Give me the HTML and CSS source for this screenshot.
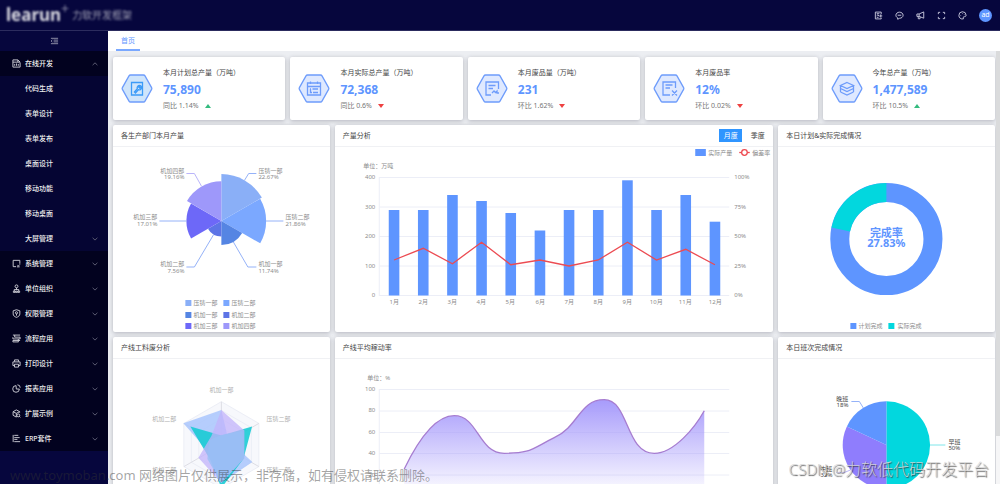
FILE: index.html
```html
<!DOCTYPE html>
<html lang="zh-CN">
<head>
<meta charset="utf-8">
<title>力软开发平台</title>
<link rel="stylesheet" href="styles.css">
</head>
<body>
<svg class="defs" aria-hidden="true">
  <symbol id="down" viewBox="0 0 6 4"><path d="M.6.8 3 3.1 5.4.8"/></symbol>
  <symbol id="up" viewBox="0 0 6 4"><path d="M.6 3.1 3 .8 5.4 3.1"/></symbol>
  <symbol id="hex" viewBox="0 0 32 29"><path d="M9.5 1h13q1 0 1.5.9l6.6 11.7q.5.9 0 1.8L24 27.1q-.5.9-1.5.9h-13q-1 0-1.5-.9L1.400 15.400q-.5-.9 0-1.800L8 1.900Q8.500 1 9.500 1z"/></symbol>
</svg>

<header class="topbar">
  <div class="brand"><span class="brand-name">learun<sup>+</sup></span><span class="brand-sub">力软开发框架</span></div>
  <div class="tools">
    <button class="tool" aria-label="编辑"><svg viewBox="0 0 10 10"><path d="M8 3.500V1.200H1.500v7.600H8V7.500M3 3h3M3 5.200l1.500-1 1 1.600M3 7h2M5.800 5.500h3.400M7.500 3.800v3.400"/></svg></button>
    <button class="tool" aria-label="消息"><svg viewBox="0 0 10 10"><path d="M5 1.300c2.200 0 4 1.500 4 3.400S7.200 8.100 5 8.100L3 9.200V7.700C1.800 7.100 1 6 1 4.700c0-1.900 1.800-3.400 4-3.400zM3 4.700h4"/></svg></button>
    <button class="tool" aria-label="公告"><svg viewBox="0 0 10 10"><path d="M1 3.300h2.500L8.600 1v7L3.500 6H1zM3.500 3.300V6M2.500 6v2.600h2V6.500"/></svg></button>
    <button class="tool" aria-label="全屏"><svg viewBox="0 0 10 10"><path d="M1.500 3.500v-2h2M6.500 1.500h2v2M8.500 6.500v2h-2M3.500 8.500h-2v-2"/></svg></button>
    <button class="tool" aria-label="主题"><svg viewBox="0 0 10 10"><path d="M6 8.800C3 9.300 1 7.500 1 5a4 4 0 0 1 8-.3c0 1.700-1.700 1.600-2.600 1.700-1 .2-.1 1.300-.4 2.400zM3 4.500v.6M4.700 2.800h.6M7 4v.5"/></svg></button>
    <button class="avatar">ad</button>
  </div>
</header>

<div class="shell">
  <nav class="sidebar">
    <button class="collapse" aria-label="收起菜单"><svg viewBox="0 0 10 8"><path d="M1 1h8M4 3h5M4 5h5M1 7h8M2.600 2.800 1.200 4l1.400 1.200"/></svg></button>
    <a class="item" href="#"><svg class="ico" viewBox="0 0 10 10"><path d="M9 4V9H1V1h5.500L9 3.500H1M3 5.500v2M5 5v2.500M7 5.500v2M6.500 1v2.500"/></svg>在线开发<svg class="chev"><use href="#up"/></svg></a>
    <div class="submenu">
      <a class="item" href="#">代码生成</a>
      <a class="item" href="#">表单设计</a>
      <a class="item" href="#">表单发布</a>
      <a class="item" href="#">桌面设计</a>
      <a class="item" href="#">移动功能</a>
      <a class="item" href="#">移动桌面</a>
      <a class="item" href="#">大屏管理<svg class="chev"><use href="#down"/></svg></a>
    </div>
    <a class="item" href="#"><svg class="ico" viewBox="0 0 10 10"><path d="M4.500 8.500H1.300v-7h7.400v3.800M5.500 8.700h3M6 7l1 .8L8.800 6"/></svg>系统管理<svg class="chev"><use href="#down"/></svg></a>
    <a class="item" href="#"><svg class="ico" viewBox="0 0 10 10"><path d="M5 1a1.600 1.600 0 1 1 0 3.200A1.600 1.600 0 0 1 5 1zM5 4.200v2.300M2.500 8V6.200h5V8M1.500 8h2v1.300h-2zM4 8h2v1.300H4zM6.500 8h2v1.300h-2z"/></svg>单位组织<svg class="chev"><use href="#down"/></svg></a>
    <a class="item" href="#"><svg class="ico" viewBox="0 0 10 10"><path d="M5 .8 8.700 2v3.500C8.700 7.500 7 8.600 5 9.300 3 8.600 1.300 7.500 1.300 5.500V2zM5 3a1.200 1.200 0 1 1 0 2.400A1.200 1.200 0 0 1 5 3zM5 5.400v2"/></svg>权限管理<svg class="chev"><use href="#down"/></svg></a>
    <a class="item" href="#"><svg class="ico" viewBox="0 0 10 10"><path d="M1 1.200h8M2.800 3.500H9v2H1M1 3.500v2M7.200 8.800H1V7.200h8M3 1.200v2.300M7 5.500v3.300"/></svg>流程应用<svg class="chev"><use href="#down"/></svg></a>
    <a class="item" href="#"><svg class="ico" viewBox="0 0 10 10"><path d="M2.800 3V1h4.400v2M2.800 7.300H1V3.200h8v4.100H7.200M2.800 5.800h4.400V9H2.800z"/></svg>打印设计<svg class="chev"><use href="#down"/></svg></a>
    <a class="item" href="#"><svg class="ico" viewBox="0 0 10 10"><path d="M4.500 1.800A3.700 3.700 0 1 0 8.200 5.600H4.800zM6 .9A3.200 3.200 0 0 1 9.100 4.100"/></svg>报表应用<svg class="chev"><use href="#down"/></svg></a>
    <a class="item" href="#"><svg class="ico" viewBox="0 0 10 10"><path d="M8.500 4V3L4.800 1 1.200 3v4l3.600 2M1.200 3l3.600 1.800L8.500 3M4.800 4.800V9M7 5.500a1.600 1.600 0 1 1 0 3.200 1.600 1.600 0 0 1 0-3.200zM8 8l1.300 1.300"/></svg>扩展示例<svg class="chev"><use href="#down"/></svg></a>
    <a class="item" href="#"><svg class="ico" viewBox="0 0 10 10"><path d="M1.300 1v8M2.500 1.500H7M2.500 4h6M2.500 6h3.500M2.500 8.500H9"/></svg>ERP套件<svg class="chev"><use href="#down"/></svg></a>
  </nav>

  <main class="main">
    <div class="tabs"><a class="tab" href="#">首页</a></div>
    <div class="view">
      <div class="board">
        <section class="kpis">
          <article class="card kpi">
            <svg class="badge" viewBox="0 0 32 29"><use class="hex strong" href="#hex"/><path class="vivid" d="M10.500 8.500h11v12.500h-11zM13 18.500l3.300-3.800a2.300 2.300 0 0 1 3-3l-1.500 1.500 1 1 1.500-1.500a2.300 2.300 0 0 1-3 3L14 19.500"/></svg>
            <div><h3>本月计划总产量（万吨）</h3><strong>75,890</strong><p>同比 1.14%<i class="rise"></i></p></div>
          </article>
          <article class="card kpi">
            <svg class="badge" viewBox="0 0 32 29"><use class="hex" href="#hex"/><path d="M9.500 9h13v12h-13zM9.500 12.500h13M12.500 7.500v2.500M19.500 7.500v2.500M12 15h1M14.500 15H20M12.500 15v3.500H14M15 18.500h5"/></svg>
            <div><h3>本月实际总产量（万吨）</h3><strong>72,368</strong><p>同比 0.6%<i class="fall"></i></p></div>
          </article>
          <article class="card kpi">
            <svg class="badge" viewBox="0 0 32 29"><use class="hex" href="#hex"/><path d="M15 21h-5V8h12.500v7M12.500 11.500h7M12.500 14.500h4.500M16 19l2-2 1.500 1.500 1.500-1.500v2h2"/></svg>
            <div><h3>本月废品量（万吨）</h3><strong>231</strong><p>环比 1.62%<i class="fall"></i></p></div>
          </article>
          <article class="card kpi">
            <svg class="badge" viewBox="0 0 32 29"><use class="hex" href="#hex"/><path d="M17 21h-7V8h12.500v6M12.500 11h7M12.500 14h4.500M19 16.500l5 5M24 16.500l-5 5"/></svg>
            <div><h3>本月废品率</h3><strong>12%</strong><p>环比 0.02%<i class="fall"></i></p></div>
          </article>
          <article class="card kpi">
            <svg class="badge" viewBox="0 0 32 29"><use class="hex" href="#hex"/><path d="M16 8.500l6.500 3-6.500 3-6.500-3zM9.500 14.500l6.500 3 6.500-3M9.500 11.500v3M22.500 11.500v3M9.500 18l6.500 3 6.500-3M9.500 14.500V18M22.500 14.500V18"/></svg>
            <div><h3>今年总产量（万吨）</h3><strong>1,477,589</strong><p>环比 10.5%<i class="rise"></i></p></div>
          </article>
        </section>

        <section class="charts">
          <article class="card panel">
            <header><h2>各生产部门本月产量</h2></header>
            <svg class="chart" viewBox="0 0 216 185">
              <g transform="translate(108 74)">
                <path fill="#8aaff7" d="M0 0V-47A47 47 0 0 1 40.500-23.400z"/>
                <path fill="#7ba8ff" d="M0 0 38.800-22.300A44.700 44.700 0 0 1 38.800 22.300z"/>
                <path fill="#5585e3" d="M0 0 20.800 12A24 24 0 0 1 0 24z"/>
                <path fill="#5d74e6" d="M0 0V15.500A15.500 15.500 0 0 1-13.400 7.700z"/>
                <path fill="#6d68f8" d="M0 0-30.300 17.500A35 35 0 0 1-30.300-17.500z"/>
                <path fill="#9e98fa" d="M0 0-34.400-19.900A39.700 39.700 0 0 1 0-39.700z"/>
                <g class="leader">
                  <path d="M23-40.500 27.300-47.500H35M44.700 0H62M12 21 26.500 46H35M-8 14-27 46H-35M-35 0H-62"/>
                  <path class="lilac" d="M-20-35-27-47.500H-35"/>
                </g>
                <g class="label"><text x="37" y="-48">压铸一部</text><text x="37" y="-42">22.67%</text><text x="64" y="-2">压铸二部</text><text x="64" y="5">21.86%</text><text x="37" y="45">机加一部</text><text x="37" y="52">11.74%</text></g>
                <g class="label end"><text x="-37" y="-48">机加四部</text><text x="-37" y="-42">19.16%</text><text x="-64" y="-2">机加三部</text><text x="-64" y="5">17.01%</text><text x="-37" y="45">机加二部</text><text x="-37" y="52">7.56%</text></g>
              </g>
              <g>
                <rect x="72" y="153" width="6" height="6" fill="#8aaff7"/><rect x="110" y="153" width="6" height="6" fill="#7ba8ff"/>
                <rect x="72" y="165" width="6" height="6" fill="#5585e3"/><rect x="110" y="165" width="6" height="6" fill="#5d74e6"/>
                <rect x="72" y="176" width="6" height="6" fill="#6d68f8"/><rect x="110" y="176" width="6" height="6" fill="#9e98fa"/>
              </g>
              <g class="label"><text x="80" y="158">压铸一部</text><text x="118" y="158">压铸二部</text><text x="80" y="170">机加一部</text><text x="118" y="170">机加二部</text><text x="80" y="181">机加三部</text><text x="118" y="181">机加四部</text></g>
            </svg>
          </article>

          <article class="card panel wide">
            <header><h2>产量分析</h2><div class="switch"><button class="on">月度</button><button>季度</button></div></header>
            <svg class="chart" viewBox="0 0 438 185">
              <path class="grid" d="M44 30.500H394M44 60H394M44 89.500H394M44 119H394M44 148.500H394M44 30V149"/>
              <g class="bars">
                <rect x="53.500" y="63" width="10.600" height="85.500"/><rect x="82.700" y="63" width="10.600" height="85.500"/><rect x="111.900" y="48" width="10.600" height="100.500"/><rect x="141" y="54" width="10.600" height="94.500"/><rect x="170.200" y="66" width="10.600" height="82.500"/><rect x="199.400" y="83.500" width="10.600" height="65"/><rect x="228.500" y="63" width="10.600" height="85.500"/><rect x="257.700" y="63" width="10.600" height="85.500"/><rect x="286.900" y="33.300" width="10.600" height="115.200"/><rect x="316" y="63" width="10.600" height="85.500"/><rect x="345.200" y="48" width="10.600" height="100.500"/><rect x="374.400" y="74.700" width="10.600" height="73.800"/>
              </g>
              <path class="trend" d="M58.800 113 88 101.300 117.200 116.700 146.300 95.300 175.500 117.700 204.700 113 233.800 119 263 113 292.200 95.300 321.300 113 350.500 102.300 379.700 117.700"/>
              <g class="label end"><text x="40" y="32">400</text><text x="40" y="62">300</text><text x="40" y="91">200</text><text x="40" y="121">100</text><text x="40" y="150">0</text></g>
              <g class="label"><text x="28" y="21">单位：万吨</text><text x="399" y="32">100%</text><text x="399" y="62">75%</text><text x="399" y="91">50%</text><text x="399" y="121">25%</text><text x="399" y="150">0%</text></g>
              <g class="label mid"><text x="59" y="157">1月</text><text x="88" y="157">2月</text><text x="117" y="157">3月</text><text x="146" y="157">4月</text><text x="175" y="157">5月</text><text x="205" y="157">6月</text><text x="234" y="157">7月</text><text x="263" y="157">8月</text><text x="292" y="157">9月</text><text x="321" y="157">10月</text><text x="350" y="157">11月</text><text x="380" y="157">12月</text></g>
              <rect x="360" y="2" width="10.600" height="7" fill="#5e95ff"/>
              <path class="mark" d="M404 5.500h10.500"/><circle class="mark" cx="409.200" cy="5.500" r="2.800"/>
              <g class="label"><text x="373" y="8">实际产量</text><text x="417" y="8">偏差率</text></g>
            </svg>
          </article>

          <article class="card panel">
            <header><h2>本日计划&amp;实际完成情况</h2></header>
            <svg class="chart" viewBox="0 0 216 185">
              <g transform="translate(108 92)">
                <circle class="ring" r="46.600"/>
                <circle class="ring done" r="46.600" pathLength="10000" stroke-dasharray="2173 7827" stroke-dashoffset="-7827" transform="rotate(-90)"/>
                <text class="center" y="-2">完成率</text><text class="center" y="8">27.83%</text>
              </g>
              <rect x="72" y="176" width="6" height="6" fill="#5e95ff"/><rect x="110" y="176" width="6" height="6" fill="#02d7de"/>
              <g class="label"><text x="80" y="181">计划完成</text><text x="119" y="181">实际完成</text></g>
            </svg>
          </article>

          <article class="card panel">
            <header><h2>产线工料废分析</h2></header>
            <svg class="chart" viewBox="0 0 216 185">
              <g transform="translate(108 86)">
                <g class="web">
                  <path class="fill" d="M0-43.300 37.500-21.600V21.600L0 43.300-37.500 21.600V-21.600z"/>
                  <path d="M0-34.600 30-17.300V17.300L0 34.600-30 17.300V-17.300z"/>
                  <path class="fill" d="M0-26 22.500-13V13L0 26-22.500 13V-13z"/>
                  <path d="M0-17.300 15-8.700V8.700L0 17.300-15 8.700V-8.700z"/>
                  <path class="spoke" d="M0-43.300V43.300M37.500-21.600-37.500 21.600M-37.500-21.600 37.500 21.600"/>
                </g>
                <path fill="#a9c6fd" fill-opacity=".85" d="M0-35 7-5 31 17 0 38-10 10-38-21.700z"/>
                <path fill="#14cbd3" fill-opacity=".88" d="M0-9.500 30.700-18.500 22 14 0 43-11 15-31-18.500z"/>
                <path fill="#c2b3fb" fill-opacity=".75" d="M0-35 23-14.500V13L0 38-23 12.700-10-9z"/>
                <path fill="#98bff5" fill-opacity=".8" d="M0-10 21-14 23 13 0 38-14 14-12-5z"/>
                <g class="label pale mid"><text y="-53">机加一部</text></g>
                <g class="label pale end"><text x="-45" y="-24">机加二部</text><text x="-45" y="27">机加三部</text></g>
                <g class="label pale"><text x="45" y="-24">压铸二部</text><text x="45" y="27">压铸一部</text></g>
              </g>
            </svg>
          </article>

          <article class="card panel wide">
            <header><h2>产线平均稼动率</h2></header>
            <svg class="chart" viewBox="0 0 438 185">
              <defs><linearGradient id="fade" x1="0" y1="0" x2="0" y2="1"><stop offset="0" stop-color="#a79bfb"/><stop offset="1" stop-color="#a79bfb" stop-opacity="0"/></linearGradient></defs>
              <path class="grid" d="M44 30.500H394M44 52H394M44 73.500H394M44 94.500H394M44 116H394M44 137.500H394M44 30V138"/>
              <path fill="url(#fade)" d="M69 110C84 79 101 56.700 119 56.700 143 56.700 143 94.300 169 94.300 196 94.300 196 90 219 78.700 244 67 244 40.700 269 40.700 294 40.700 290 94.300 319 94.300 339 94.300 360 68 369 51.700V137.500H69z"/>
              <path class="curve" d="M69 110C84 79 101 56.700 119 56.700 143 56.700 143 94.300 169 94.300 196 94.300 196 90 219 78.700 244 67 244 40.700 269 40.700 294 40.700 290 94.300 319 94.300 339 94.300 360 68 369 51.700"/>
              <g class="label"><text x="32" y="21">单位：%</text></g>
              <g class="label end"><text x="40" y="32">100</text><text x="40" y="53">80</text><text x="40" y="75">60</text><text x="40" y="96">40</text><text x="40" y="118">20</text><text x="40" y="139">0</text></g>
            </svg>
          </article>

          <article class="card panel">
            <header><h2>本日班次完成情况</h2></header>
            <svg class="chart" viewBox="0 0 216 185">
              <g transform="translate(108 86)">
                <path fill="#02d7de" d="M0 0V-43.700A43.700 43.700 0 0 1 0 43.700z"/>
                <path fill="#8f7dfd" d="M0 0V43.700A43.700 43.700 0 0 1-39.500-18.600z"/>
                <path fill="#5e95ff" d="M0 0-39.500-18.600A43.700 43.700 0 0 1 0-43.700z"/>
                <g class="leader"><path class="aqua" d="M43.700 0H59"/><path d="M-23-37-27-43.500H-35"/><path class="lilac" d="M-36 25-42 27.500H-50"/></g>
                <g class="label dark"><text x="62" y="-1">早班</text><text x="62" y="5">50%</text></g>
                <g class="label dark end"><text x="-38" y="-44">晚班</text><text x="-38" y="-38">18%</text><text x="-54" y="26">中班</text><text x="-54" y="32">32%</text></g>
              </g>
            </svg>
          </article>
        </section>
      </div>
      <div class="rail"><div class="thumb"></div></div>
    </div>
  </main>
</div>

<p class="notice">www.toymoban.com 网络图片仅供展示，非存储，如有侵权请联系删除。</p>
<p class="credit"><span>CSDN @</span>力软低代码开发平台</p>
</body>
</html>
```

FILE: styles.css
```css
* { box-sizing: border-box; margin: 0; padding: 0; }

body {
  height: 100vh;
  display: flex;
  flex-direction: column;
  overflow: hidden;
  background: #eef0f4;
  color: #444;
  font: 7px/1 "Noto Sans", "Noto Sans CJK SC", sans-serif;
}

a { color: inherit; text-decoration: none; }
button { border: 0; background: none; color: inherit; font: inherit; cursor: pointer; }
svg { display: block; fill: none; flex: none; }
.defs { position: absolute; width: 0; height: 0; }

/* Top bar */
.topbar {
  flex: none;
  height: 31px;
  padding: 0 8px 0 6px;
  display: flex;
  align-items: center;
  justify-content: space-between;
  background: #06063d;
  border-bottom: 1px solid #2c2c5e;
}
.brand { display: flex; align-items: center; gap: 3px; color: #fff; }
.brand-name { font-size: 17px; font-weight: 700; line-height: 24px; filter: blur(1px); opacity: .85; }
.brand-name sup { font-size: 14px; line-height: 0; font-weight: 400; opacity: .6; }
.brand-sub { font-size: 10px; filter: blur(1px); opacity: .6; }
.tools { display: flex; align-items: center; gap: 12px; color: #cfcfe2; }
.tool svg { width: 9px; height: 9px; stroke: currentColor; stroke-width: 1; }
.avatar { width: 13px; height: 13px; border-radius: 50%; background: #5e95ff; color: #fff; line-height: 12px; }

.shell { flex: 1; min-height: 0; display: flex; }

/* Sidebar */
.sidebar { flex: none; width: 108px; background: #06063d; color: #eee; font-weight: 500; }
.collapse { display: flex; width: 100%; height: 20px; align-items: center; justify-content: center; }
.collapse svg { width: 9px; height: 8px; stroke: #9a9ab0; }
.item {
  display: flex;
  align-items: center;
  height: 25px;
  padding: 0 10px 0 12px;
  gap: 4px;
  background: #02021f;
}
.submenu .item { padding-left: 25px; background: #050533; }
.ico { width: 9px; height: 9px; stroke: #d5d5dd; stroke-width: 1; }
.chev { width: 6px; height: 4px; margin-left: auto; stroke: #5c5c72; stroke-width: 1; }

/* Tabs */
.main { flex: 1; min-width: 0; display: flex; flex-direction: column; }
.tabs { flex: none; display: flex; height: 20px; padding: 0 8px; background: #fff; }
.tab { padding: 0 5px; line-height: 20px; color: #5e95ff; border-bottom: 2px solid #7aa8ff; }

/* Dashboard */
.view { flex: 1; min-height: 0; display: flex; }
.board { flex: 1; min-width: 0; padding: 6px 1px 5px 5px; display: flex; flex-direction: column; gap: 5px; overflow: hidden; background: #eceef2; }
.rail { flex: none; width: 4px; background: #f6f6f7; }
.thumb { height: 89%; background: #dadbdc; }
.kpis { flex: none; display: grid; grid-template-columns: repeat(5, 1fr); gap: 5px; }
.charts { flex: none; display: grid; grid-template-columns: repeat(4, 1fr); gap: 5px; }
.card { min-width: 0; background: #fff; border-radius: 2px; box-shadow: 0 1px 4px rgba(30, 30, 50, .28); }

.kpi { display: flex; align-items: center; gap: 10px; padding: 7px 8px; white-space: nowrap; }
.kpi h3 { font-size: 7px; font-weight: 400; line-height: 17px; }
.kpi strong { display: block; font-size: 12px; line-height: 17px; color: #5e95ff; }
.kpi p { display: flex; align-items: center; gap: 6px; line-height: 15px; color: #777; }
.badge { width: 32px; height: 29px; stroke: #6e9cfb; stroke-width: 1.3; }
.hex { fill: #dfe9ff; }
.hex.strong { fill: #cfe5fb; }
.vivid { stroke: #3b9bf8; }
.rise, .fall { border: 3px solid transparent; }
.rise { border-top: 0; border-bottom: 4px solid #34bb7e; }
.fall { border-bottom: 0; border-top: 4px solid #ee4141; }

.wide { grid-column: span 2; }
.panel header { display: flex; align-items: center; justify-content: space-between; height: 22px; padding: 0 8px; border-bottom: 1px solid #f0f1f4; }
.panel h2 { font-size: 7px; font-weight: 400; }
.switch { display: flex; }
.switch button { width: 23px; height: 13px; }
.switch button + button { width: 31px; margin-right: -8px; }
.switch .on { background: #2f95ff; color: #fff; }

/* Charts */
.chart { width: 100%; height: 185px; }
.label { fill: #8c8c8c; font-size: 6px; }
.pale { fill: #b0b0b0; }
.dark { fill: #444; }
.end { text-anchor: end; }
.mid { text-anchor: middle; }
.leader { stroke: #95b2f8; stroke-width: 1; }
.lilac { stroke: #bab5fa; }
.aqua { stroke: #7ee6ea; }
.grid { stroke: #eceef7; }
.bars { fill: #5e95ff; }
.trend { stroke: #ec4b52; stroke-width: 1.3; }
.mark { stroke: #ee4a50; stroke-width: 1.3; fill: #fff; }
.ring { stroke: #5e95ff; stroke-width: 19px; }
.ring.done { stroke: #02d7de; }
.center { fill: #5e95ff; font-size: 11px; font-weight: 700; text-anchor: middle; }
.web { stroke: #eceef6; }
.web .fill { fill: #f7f8fc; }
.spoke { stroke: #dddde4; }
.curve { stroke: #a67cd0; stroke-width: 1.3; }

/* Overlaid marks */
.notice { position: absolute; left: 10px; bottom: 0; font-size: 13px; line-height: 18px; color: rgba(50, 50, 50, .45); white-space: nowrap; }
.credit { position: absolute; right: 11px; bottom: 4px; font-size: 16px; line-height: 22px; font-weight: 300; color: rgba(215, 215, 215, .9); text-shadow: 1px 1px 1px rgba(50, 50, 50, .8); white-space: nowrap; }
.credit span { font-size: 15px; }
```
